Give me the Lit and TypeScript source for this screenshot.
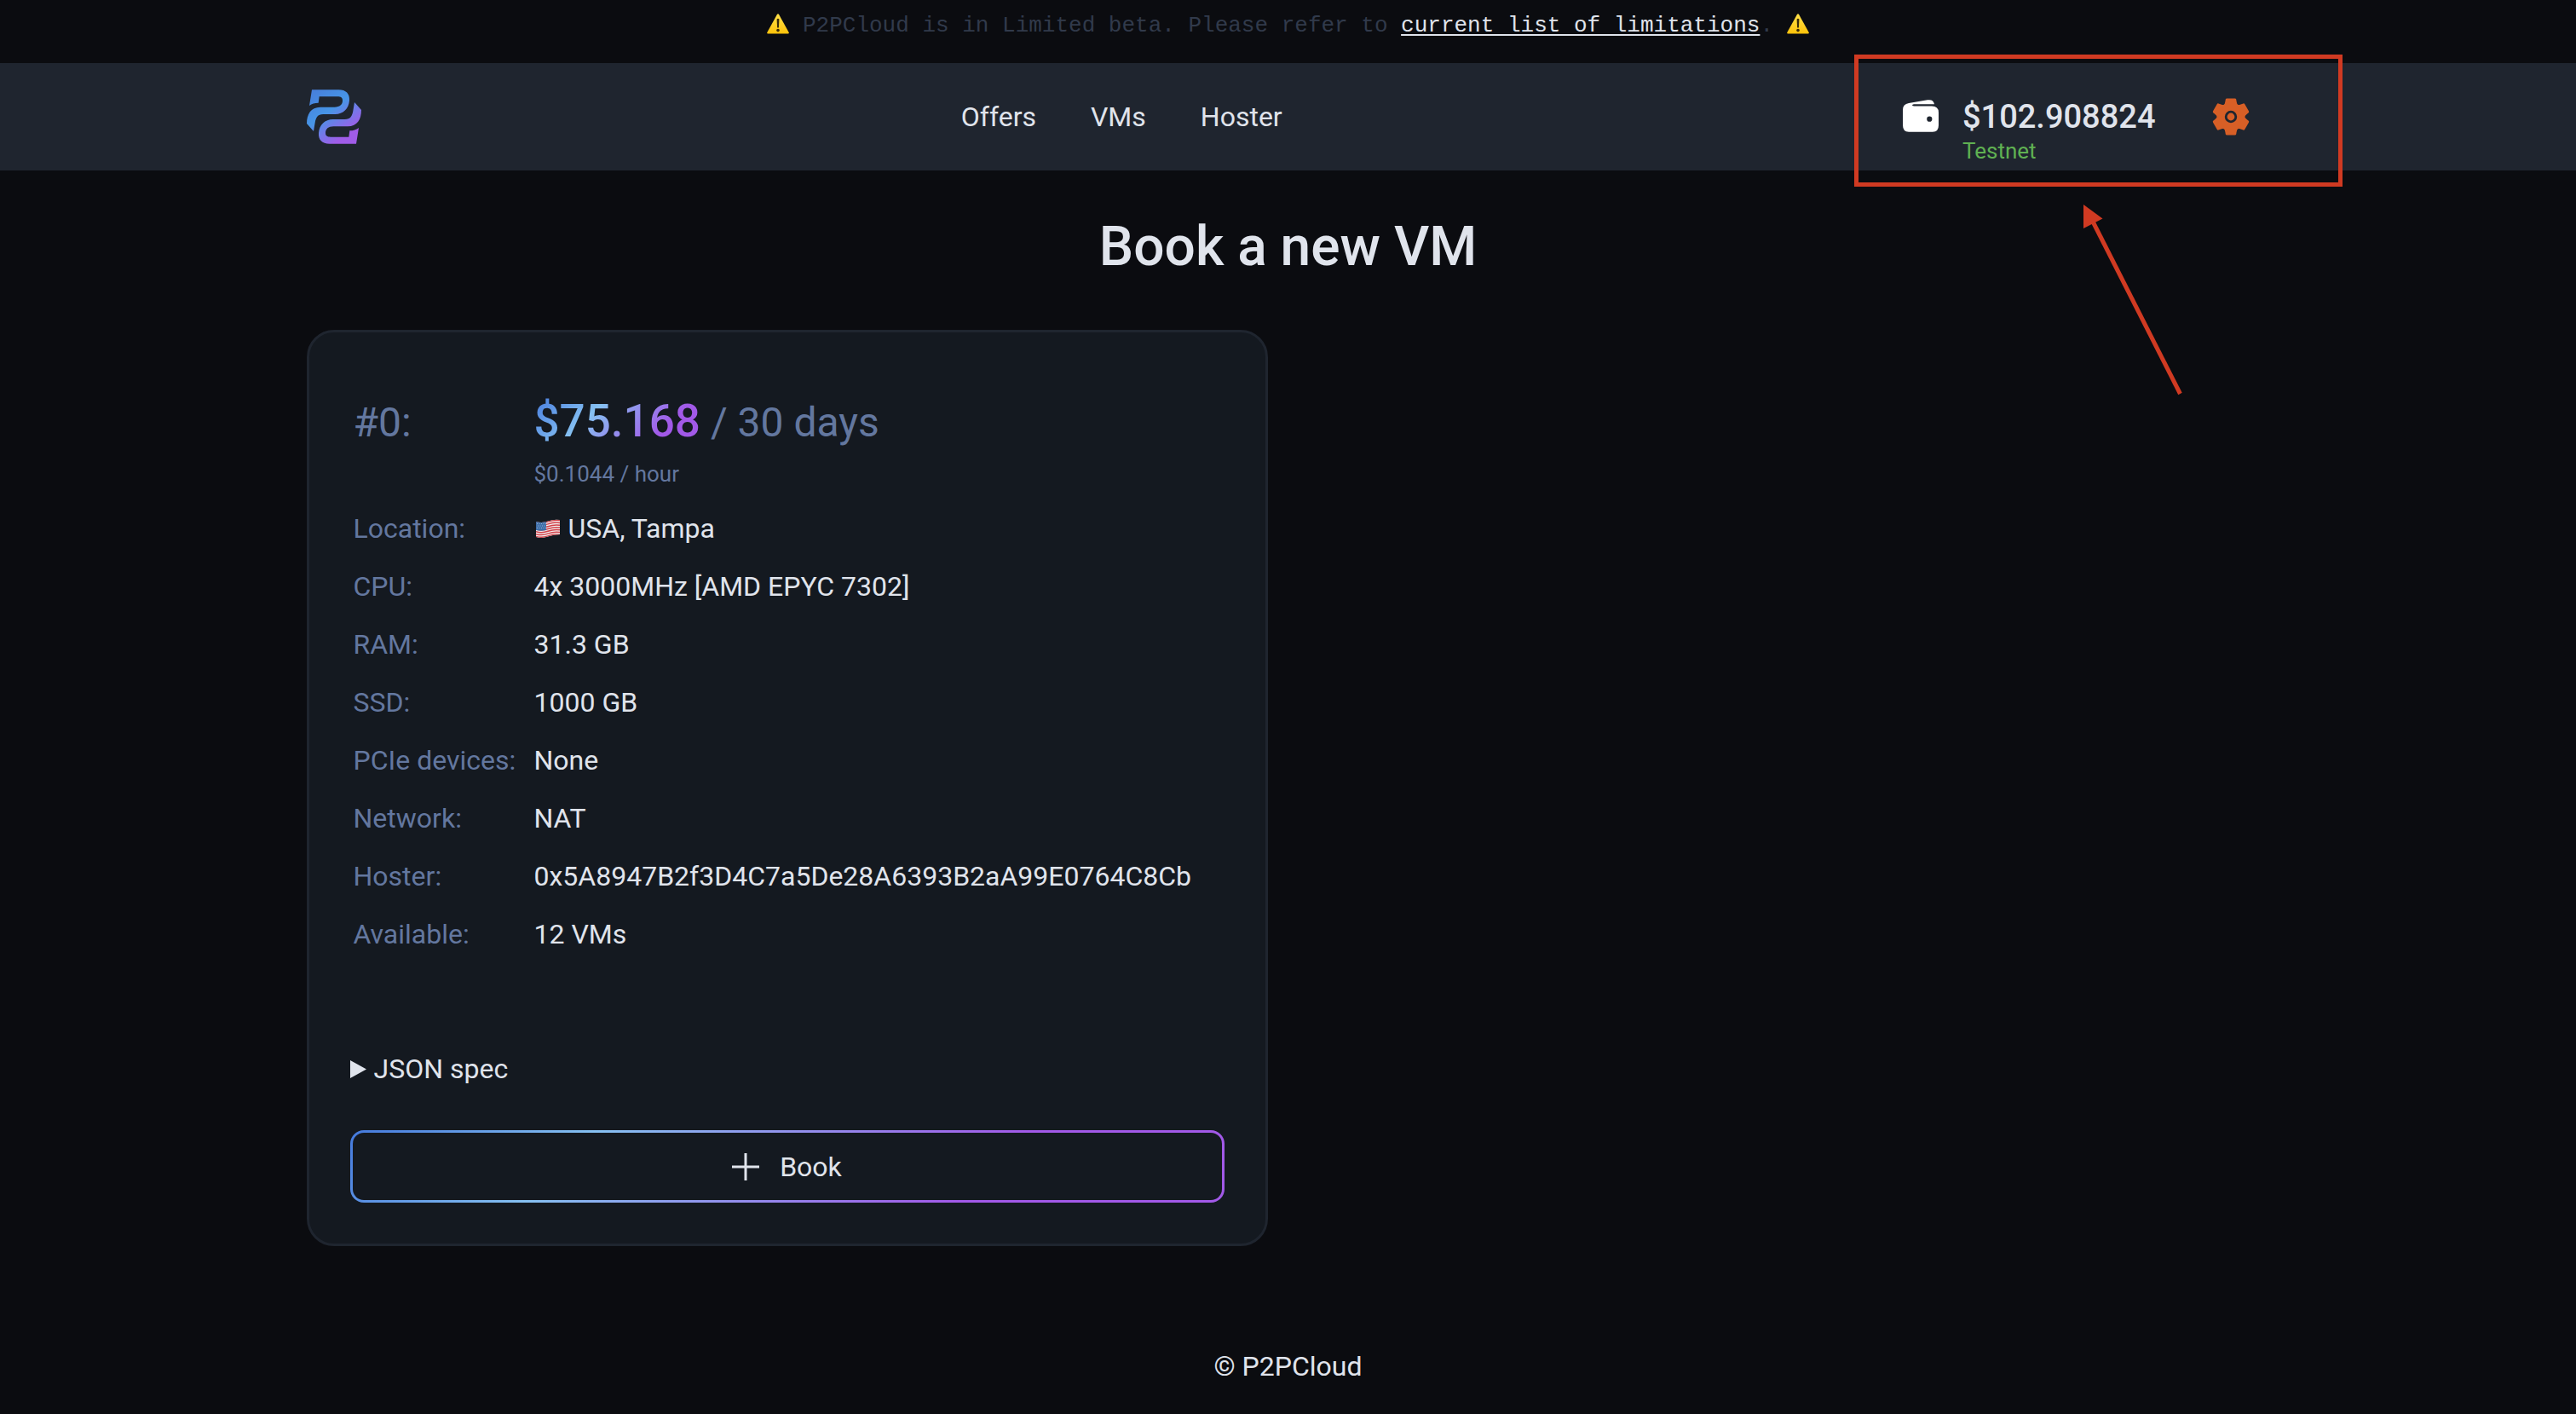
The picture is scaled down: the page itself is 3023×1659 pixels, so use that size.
import { LitElement, html, svg, css } from "lit";
import { customElement } from "lit/decorators.js";

const SPECS: [string, string][] = [
  ["CPU:", "4x 3000MHz [AMD EPYC 7302]"],
  ["RAM:", "31.3 GB"],
  ["SSD:", "1000 GB"],
  ["PCIe devices:", "None"],
  ["Network:", "NAT"],
  ["Hoster:", "0x5A8947B2f3D4C7a5De28A6393B2aA99E0764C8Cb"],
  ["Available:", "12 VMs"],
];

const LOGO_HALF =
  "M78 76H172C198 76 212 90 210 114C208 142 188 162 160 162H118C98 162 92 174 89 192L84 222L60 195C60 162 74 137 108 137H158C176 137 186 128 186 114C186 104 180 100 168 100H104L101 122C88 122 78 125 69 132Z";

const warning = () => html`
  <svg class="warning" viewBox="0 0 26 24" aria-hidden="true">
    <defs>
      <linearGradient id="w" x1="0" y1="0" x2="0" y2="1">
        <stop offset="0" stop-color="#ffe14a" />
        <stop offset="1" stop-color="#fdc20a" />
      </linearGradient>
    </defs>
    <path fill="url(#w)" d="M11.8 1.2Q13 -.6 14.2 1.2L25.7 22Q26.3 23.5 24.8 23.6H1.2Q-.3 23.5 .3 22Z" />
    <path fill="#3b2d0a" d="M11.6 6.4Q13 5 14.4 6.4L13.9 16.4H12.1Z" />
    <circle fill="#3b2d0a" cx="13" cy="19.6" r="1.8" />
  </svg>
`;

@customElement("app-banner")
export class AppBanner extends LitElement {
  static styles = css`
    .banner {
      display: flex;
      justify-content: center;
      align-items: center;
      gap: 16px;
      height: 60px;
      padding-bottom: 14px;
      font: 26px/32px "Liberation Mono", monospace;
      color: #313a4b;
    }
    .text {
      margin: 0;
    }
    .link {
      color: #e0e4ec;
      text-decoration-thickness: 2px;
      text-underline-offset: 3px;
    }
    .warning {
      width: 26px;
      height: 24px;
      padding-bottom: 4px;
    }
  `;

  render() {
    return html`
      <div class="banner">
        ${warning()}
        <p class="text">P2PCloud is in Limited beta. Please refer to <a class="link" href="#limitations">current list of limitations</a>.</p>
        ${warning()}
      </div>
    `;
  }
}

@customElement("app-header")
export class AppHeader extends LitElement {
  static styles = css`
    .header {
      background: #1f252f;
    }
    .inner {
      display: flex;
      justify-content: space-between;
      align-items: center;
      max-width: 2304px;
      height: 126px;
      margin: 0 auto;
    }
    .logo,
    .logo svg {
      display: block;
      width: 64px;
      height: 64px;
    }
    .nav {
      display: flex;
      gap: 64px;
      line-height: 40px;
    }
    .nav a {
      color: inherit;
      text-decoration: none;
    }
    .account {
      position: relative;
      display: flex;
      align-items: flex-start;
      box-sizing: border-box;
      height: 126px;
      padding: 39px 24px 0;
    }
    .wallet {
      width: 42px;
      height: 38px;
      margin: 4px 28px 0 0;
    }
    .amount {
      font-size: 38px;
      line-height: 48px;
      font-weight: 500;
    }
    .network {
      font-size: 26px;
      line-height: 32px;
      color: #5fb152;
    }
    .settings {
      display: block;
      margin: 2px 0 0 66px;
      padding: 0;
      border: 0;
      background: none;
      cursor: pointer;
    }
    .settings svg {
      display: block;
      width: 44px;
      height: 44px;
    }
    .callout {
      position: absolute;
      right: -85px;
      top: -10px;
      width: 573px;
      height: 400px;
      pointer-events: none;
      z-index: 1;
    }
  `;

  render() {
    return html`
      <header class="header">
        <div class="inner">
          <a class="logo" href="#home" aria-label="P2PCloud">
            <svg viewBox="60 75 192 192" aria-hidden="true">
              <defs>
                <linearGradient id="g" gradientUnits="userSpaceOnUse" x1="80" y1="80" x2="220" y2="262">
                  <stop offset="0" stop-color="#477fdb" />
                  <stop offset=".4" stop-color="#4795e6" />
                  <stop offset=".85" stop-color="#a05ce8" />
                </linearGradient>
              </defs>
              <path fill="url(#g)" d="${LOGO_HALF}M234 266H140C114 266 100 252 102 228C104 200 124 180 152 180H194C214 180 220 168 223 150L228 120L252 147C252 180 238 205 204 205H154C136 205 126 214 126 228C126 238 132 242 144 242H208L211 220C224 220 234 217 243 210Z" />
            </svg>
          </a>
          <nav class="nav">
            <a href="#offers">Offers</a>
            <a href="#vms">VMs</a>
            <a href="#hoster">Hoster</a>
          </nav>
          <div class="account">
            <svg class="wallet" viewBox="0 0 42 38" aria-hidden="true">
              <path fill="#fff" fill-rule="evenodd" d="M0 12Q0 5 7 4L29 .3Q36 -.8 37 5.3H13Q9 6.4 13 7.5H34Q42 7.5 42 15V30Q42 37.7 35 37.7H7Q0 37.7 0 30ZM34.4 22.7A3.1 3.1 0 1 0 28.2 22.7A3.1 3.1 0 1 0 34.4 22.7Z" />
            </svg>
            <div>
              <div class="amount">$102.908824</div>
              <div class="network">Testnet</div>
            </div>
            <button class="settings" aria-label="Settings">
              <svg viewBox="-22 -22 44 44" aria-hidden="true">
                <circle r="16.5" fill="#d75f26" />
                ${[0, 60, 120, 180, 240, 300].map(
                  (a) => svg`<path fill="#d75f26" transform="rotate(${a})" d="M-8.5 -13Q-7 -15 -6.6 -18L-6.2 -20.4Q-6 -21.5 -4.6 -21.5H4.6Q6 -21.5 6.2 -20.4L6.6 -18Q7 -15 8.5 -13Z" />`
                )}
                <circle r="5.8" fill="#d75f26" stroke="#1f252f" stroke-width="2.8" />
              </svg>
            </button>
            <svg class="callout" viewBox="0 0 573 400" fill="none" stroke="#d03a22" stroke-width="5" aria-hidden="true">
              <rect x="2.5" y="2.5" width="568" height="150" />
              <path d="M280 196L382.500 398" />
              <path fill="#d03a22" stroke="none" d="M269 176L291.500 192.500L269 204Z" />
            </svg>
          </div>
        </div>
      </header>
    `;
  }
}

@customElement("offer-card")
export class OfferCard extends LitElement {
  static styles = css`
    .card {
      box-sizing: border-box;
      padding: 48px;
      border: 3px solid #1f252f;
      border-radius: 32px;
      background: #141920;
    }
    .specs {
      border-collapse: separate;
      border-spacing: 4px;
      font-size: 32px;
      line-height: 64px;
    }
    .specs th,
    .specs td {
      padding: 0;
      text-align: left;
      vertical-align: baseline;
    }
    .specs th {
      min-width: 208px;
      width: 208px;
      font-weight: 400;
      color: #63779f;
      white-space: nowrap;
    }
    .specs .index {
      font-size: 48px;
    }
    .specs .cost {
      padding: 12px 0 8px;
      color: #63779f;
    }
    .month {
      font-size: 48px;
      line-height: 80px;
    }
    .price {
      font-size: 53px;
      font-weight: 500;
      background: linear-gradient(135deg, #4479dd 0%, #86c1f2 35%, #a259e8 75%);
      -webkit-background-clip: text;
      background-clip: text;
      color: transparent;
    }
    .hour {
      font-size: 26px;
      line-height: 40px;
    }
    .flag {
      width: 28px;
      height: 22px;
      margin: 0 10px 0 2px;
    }
    .json {
      margin-top: 102px;
      line-height: 40px;
    }
    .json summary {
      display: flex;
      align-items: center;
      gap: 9px;
      list-style: none;
      cursor: pointer;
    }
    .json summary::-webkit-details-marker {
      display: none;
    }
    .marker {
      width: 19px;
      height: 21px;
    }
    .json[open] .marker {
      transform: rotate(90deg);
    }
    .book {
      display: flex;
      justify-content: center;
      align-items: center;
      gap: 24px;
      width: 100%;
      height: 85px;
      margin-top: 52px;
      border: 3px solid transparent;
      border-radius: 16px;
      background:
        linear-gradient(#141920, #141920) padding-box,
        linear-gradient(135deg, #4479dd 0%, #86c1f2 26%, #a259e8 72%) border-box;
      color: inherit;
      font: inherit;
      cursor: pointer;
    }
    .plus {
      width: 32px;
      height: 32px;
    }
  `;

  render() {
    return html`
      <article class="card">
        <table class="specs">
          <tr>
            <th class="index" scope="row">#0:</th>
            <td class="cost">
              <div class="month"><span class="price">$75.168</span> / 30 days</div>
              <div class="hour">$0.1044 / hour</div>
            </td>
          </tr>
          <tr>
            <th scope="row">Location:</th>
            <td>
              <svg class="flag" viewBox="0 0 28 22" aria-hidden="true">
                <defs>
                  <clipPath id="f">
                    <path d="M0 3Q7 5 14 2.500T28 1V18Q21 18 14 20.500T0 21Z" />
                  </clipPath>
                </defs>
                <g clip-path="url(#f)">
                  <rect width="28" height="22" fill="#f3eeee" />
                  ${[0, 1, 2, 3, 4, 5, 6].map(
                    (i) => svg`<path fill="none" stroke="#d2414a" stroke-width="1.5" d="M0 ${3.6 + i * 2.8}q7 2 14 -.5t14 -1.5" />`
                  )}
                  <path fill="#3f6ea8" d="M0 2H12V13Q6 14.500 0 13Z" />
                  <path fill="none" stroke="#8fb0d6" stroke-dasharray="1 1.500" d="M1 5.500H12M2 8H12M1 10.500H12" />
                </g>
              </svg>USA, Tampa
            </td>
          </tr>
          ${SPECS.map(([name, value]) => html`<tr><th scope="row">${name}</th><td>${value}</td></tr>`)}
        </table>
        <details class="json">
          <summary>
            <svg class="marker" viewBox="0 0 19 21" aria-hidden="true"><path fill="#e0e4ec" d="M0 0L19 10.500L0 21Z" /></svg>JSON spec
          </summary>
        </details>
        <button class="book">
          <svg class="plus" viewBox="0 0 32 32" aria-hidden="true"><path stroke="#e0e4ec" stroke-width="3" d="M16 0V32M0 16H32" /></svg>Book
        </button>
      </article>
    `;
  }
}

@customElement("app-root")
export class AppRoot extends LitElement {
  static styles = css`
    :host {
      display: block;
      box-sizing: border-box;
      min-height: 100vh;
      background: #0b0c10;
      color: #e0e4ec;
      font-family: Roboto, "Liberation Sans", sans-serif;
      font-size: 32px;
    }
    .main {
      max-width: 2304px;
      margin: 0 auto;
    }
    .title {
      margin: 0;
      padding: 50px 0 57px;
      font-size: 64px;
      line-height: 80px;
      font-weight: 500;
      text-align: center;
    }
    .offers {
      display: grid;
      grid-template-columns: repeat(2, minmax(0, 1fr));
      gap: 48px;
    }
    .footer {
      padding: 121px 0 32px;
      line-height: 40px;
      text-align: center;
    }
  `;

  render() {
    return html`
      <app-banner></app-banner>
      <app-header></app-header>
      <main class="main">
        <h1 class="title">Book a new VM</h1>
        <div class="offers"><offer-card></offer-card></div>
      </main>
      <footer class="footer">© P2PCloud</footer>
    `;
  }
}
